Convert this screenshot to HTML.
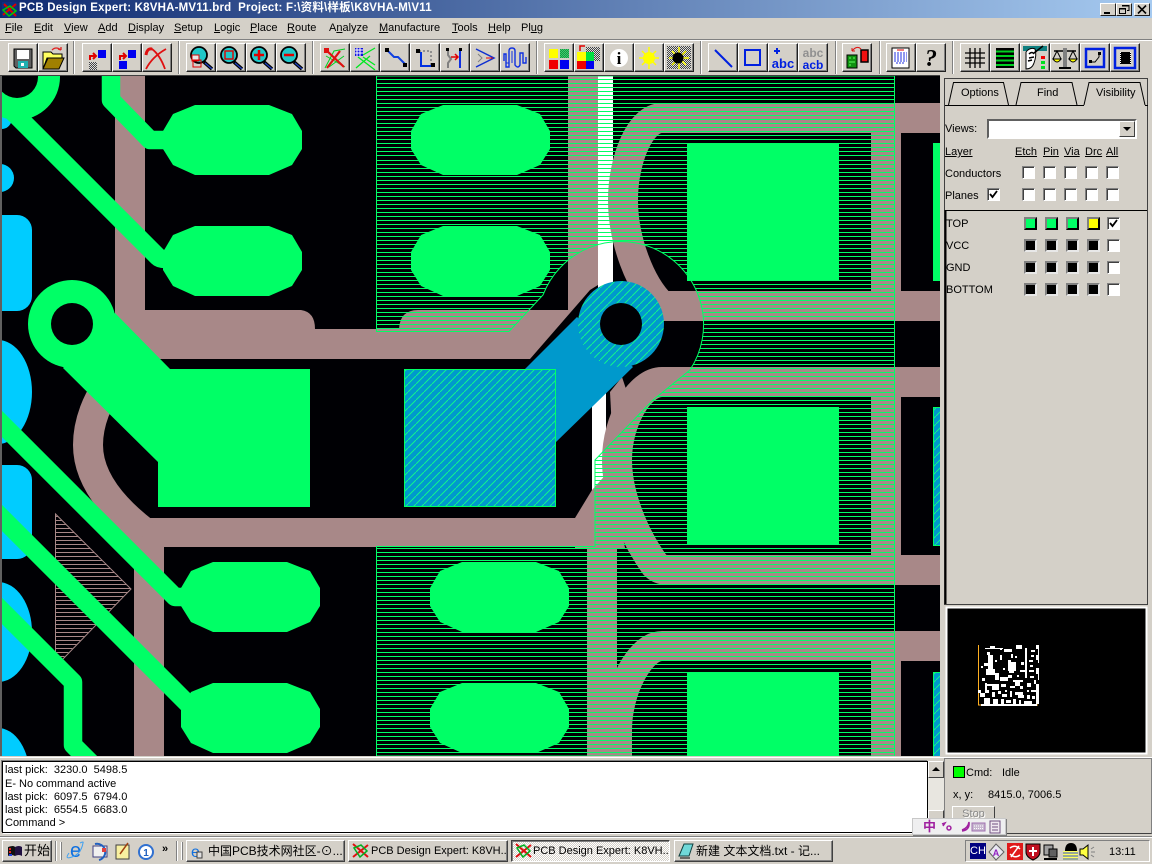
<!DOCTYPE html>
<html><head><meta charset="utf-8"><title>PCB Design Expert</title>
<style>
html,body{margin:0;padding:0}
body{width:1152px;height:864px;overflow:hidden;position:relative;background:#d4d0c8;font-family:"Liberation Sans","Noto Sans CJK SC",sans-serif;font-size:11px;color:#000}
.a{position:absolute}
.t{position:absolute;white-space:pre;line-height:13px}
.b{position:absolute;box-sizing:border-box;width:30px;height:29px;top:43px;background:#d4d0c8;border:1px solid;border-color:#fff #202020 #202020 #fff;box-shadow:inset -1px -1px #808080}
.g{position:absolute;top:41px;width:1px;height:33px;background:#808080;border-right:1px solid #fff}
.c{position:absolute;box-sizing:border-box;width:13px;height:13px;background:#fff;border:1px solid;border-color:#808080 #fff #fff #808080;box-shadow:inset 1px 1px #404040}
.s{position:absolute;box-sizing:border-box;width:13px;height:13px;border:2px solid;border-color:#808080 #000 #000 #808080}
.k{background:#000;border-color:#808080 #e8e8e8 #e8e8e8 #808080}
.w{position:absolute;top:3px;height:13px;box-sizing:border-box;width:16px;background:#d4d0c8;border:1px solid;border-color:#fff #202020 #202020 #fff}
.tb{position:absolute;top:840px;height:22px;box-sizing:border-box;background:#d4d0c8;border:1px solid;border-color:#fff #404040 #404040 #fff;box-shadow:inset -1px -1px #808080;font-size:11px;line-height:20px;white-space:pre;overflow:hidden}
u{text-decoration:underline}
</style></head><body>

<div class="a" style="left:0;top:0;width:1152px;height:18px;background:linear-gradient(90deg,#0f2a70,#a6caf0)"></div>
<div class="t" style="left:19px;top:2px;font-weight:bold;font-size:11.5px;color:#fff;letter-spacing:.2px">PCB Design Expert: K8VHA-MV11.brd  Project: F:\资料\样板\K8VHA-M\V11</div>
<svg class="a" style="left:2px;top:2px" width="16" height="16"><rect width="15" height="15" fill="#103080"/><path d="M1 13L14 2M2 2L14 14" stroke="#d00" stroke-width="2"/><path d="M1 8L8 4L14 9L7 14Z" fill="none" stroke="#0c0" stroke-width="1.5"/></svg>
<div class="w" style="left:1100px"><svg width="14" height="11"><rect x="3" y="8" width="6" height="2"/></svg></div>
<div class="w" style="left:1116px"><svg width="14" height="11"><path d="M5 1.500h7v5h-2M2.500 4.500h6v5h-6z" fill="none" stroke="#000"/><path d="M5 2h7M2 5h7" stroke="#000"/></svg></div>
<div class="w" style="left:1134px"><svg width="14" height="11"><path d="M3 1.500L11 9.500M11 1.500L3 9.500" stroke="#000" stroke-width="1.600"/></svg></div>

<div class="t" style="left:5px;top:22px"><u>F</u>ile</div>
<div class="t" style="left:34px;top:22px"><u>E</u>dit</div>
<div class="t" style="left:64px;top:22px"><u>V</u>iew</div>
<div class="t" style="left:98px;top:22px"><u>A</u>dd</div>
<div class="t" style="left:128px;top:22px"><u>D</u>isplay</div>
<div class="t" style="left:174px;top:22px"><u>S</u>etup</div>
<div class="t" style="left:214px;top:22px"><u>L</u>ogic</div>
<div class="t" style="left:250px;top:22px"><u>P</u>lace</div>
<div class="t" style="left:287px;top:22px"><u>R</u>oute</div>
<div class="t" style="left:329px;top:22px">A<u>n</u>alyze</div>
<div class="t" style="left:379px;top:22px"><u>M</u>anufacture</div>
<div class="t" style="left:452px;top:22px"><u>T</u>ools</div>
<div class="t" style="left:488px;top:22px"><u>H</u>elp</div>
<div class="t" style="left:521px;top:22px">Pl<u>u</u>g</div>
<div class="a" style="left:0;top:39px;width:1152px;height:1px;background:#808080"></div>
<div class="a" style="left:0;top:40px;width:1152px;height:1px;background:#fff"></div>

<div class="g" style="left:73px"></div><div class="g" style="left:178px"></div><div class="g" style="left:312px"></div><div class="g" style="left:536px"></div><div class="g" style="left:700px"></div><div class="g" style="left:835px"></div><div class="g" style="left:879px"></div><div class="g" style="left:952px"></div>

<div class="b" style="left:8px"></div><div class="b" style="left:38px"></div>
<div class="b" style="left:82px"></div><div class="b" style="left:112px"></div><div class="b" style="left:142px"></div>
<div class="b" style="left:186px"></div><div class="b" style="left:216px"></div><div class="b" style="left:246px"></div><div class="b" style="left:276px"></div>
<div class="b" style="left:320px"></div><div class="b" style="left:350px"></div><div class="b" style="left:380px"></div><div class="b" style="left:410px"></div><div class="b" style="left:440px"></div><div class="b" style="left:470px"></div><div class="b" style="left:500px"></div>
<div class="b" style="left:544px"></div><div class="b" style="left:574px"></div><div class="b" style="left:604px"></div><div class="b" style="left:634px"></div><div class="b" style="left:664px"></div>
<div class="b" style="left:708px"></div><div class="b" style="left:738px"></div><div class="b" style="left:768px"></div><div class="b" style="left:798px"></div>
<div class="b" style="left:842px"></div>
<div class="b" style="left:886px"></div><div class="b" style="left:916px"></div>
<div class="b" style="left:960px"></div><div class="b" style="left:990px"></div><div class="b" style="left:1020px"></div><div class="b" style="left:1050px"></div><div class="b" style="left:1080px"></div><div class="b" style="left:1110px"></div>

<!-- toolbar icons -->
<svg class="a" style="left:0;top:43px" width="1152" height="30">
<defs>
<pattern id="dg" width="2" height="2" patternUnits="userSpaceOnUse"><rect width="2" height="2" fill="#ddd"/><rect width="1" height="1" fill="#444"/><rect x="1" y="1" width="1" height="1" fill="#444"/></pattern>
<g id="mag"><path d="M18 19L26 26" stroke="#000" stroke-width="3.500"/><path d="M19 20L26 26" stroke="#2040c0" stroke-width="1.200"/><circle cx="13" cy="12" r="8" fill="#20c8c8" stroke="#000" stroke-width="1.800"/></g>
</defs>
<!-- save -->
<g transform="translate(8,0)"><path d="M6 6h18v19H8l-2-2z" fill="#606060" stroke="#000"/><rect x="9" y="7" width="12" height="9" fill="#fff"/><rect x="10" y="18" width="10" height="7" fill="#20b0b0"/><rect x="13" y="20" width="3" height="3" fill="#fff"/></g>
<!-- open -->
<g transform="translate(38,0)"><path d="M5 9h8l2 2h9v4H9l-4 11z" fill="#ffff60" stroke="#000"/><path d="M5 26L10 15h16l-5 11z" fill="#a08000" stroke="#000"/><path d="M14 7Q18 3 23 7M23 7l-3-1M23 7v-3" fill="none" stroke="#e02020" stroke-width="1.300"/></g>
<!-- layer move -->
<g transform="translate(82,0)"><path d="M8 17v-4h5M11 10l3 3-3 3" fill="none" stroke="#e00000" stroke-width="2"/><rect x="16" y="7" width="8" height="8" fill="#0000f0"/><rect x="7" y="19" width="8" height="8" fill="url(#dg)"/></g>
<g transform="translate(112,0)"><path d="M8 17v-4h5M11 10l3 3-3 3" fill="none" stroke="#e00000" stroke-width="2"/><rect x="16" y="7" width="8" height="8" fill="#0000f0"/><rect x="7" y="18" width="8" height="8" fill="#0000f0"/></g>
<g transform="translate(142,0)"><path d="M4 12Q5 5 10 6Q18 12 23 26M4 26Q10 14 24 6" fill="none" stroke="#e01010" stroke-width="1.800"/><path d="M4 12Q5 5 10 6" fill="none" stroke="#e01010" stroke-width="3"/></g>
<!-- zoom -->
<g transform="translate(186,0)"><use href="#mag"/><rect x="6" y="12" width="7" height="6" fill="#e8e8e8" stroke="#d00"/><rect x="7" y="17" width="8" height="7" fill="none" stroke="#e00000"/></g>
<g transform="translate(216,0)"><use href="#mag"/><rect x="9" y="8" width="8" height="8" fill="none" stroke="#e00000" stroke-width="1.400"/></g>
<g transform="translate(246,0)"><use href="#mag"/><path d="M8 12h10M13 7v10" stroke="#e00000" stroke-width="2.500"/></g>
<g transform="translate(276,0)"><use href="#mag"/><path d="M8 12h10" stroke="#e00000" stroke-width="2.500"/></g>
<!-- route -->
<g transform="translate(320,0)"><path d="M5 25L14 8L25 6M6 13L25 24M9 24L24 13" stroke="#00d020" fill="none"/><path d="M5 6L24 24M7 25L20 8" stroke="#e01010" stroke-width="2.200"/><rect x="4" y="5" width="5" height="5" fill="#e01010"/></g>
<g transform="translate(350,0)"><path d="M13 12L25 5M13 14L25 22M6 25L20 13M8 14L25 27" stroke="#00e820" fill="none" stroke-width="1.300"/><rect x="5" y="5" width="8" height="8" fill="#1010e0"/><path d="M7 5v8M10 5v8M5 7h8M5 10h8" stroke="#fff"/></g>
<g transform="translate(380,0)"><path d="M8 8L14 14L18 14L25 21" fill="none" stroke="#1040e0" stroke-width="2"/><rect x="5" y="5" width="4" height="4"/><rect x="23" y="20" width="4" height="4"/></g>
<g transform="translate(410,0)"><path d="M9 8H21V23" fill="none" stroke="#909090" stroke-width="2" stroke-dasharray="2 2"/><path d="M11 9V23H21" fill="none" stroke="#0030e0" stroke-width="2"/><rect x="6" y="6" width="4" height="4"/><rect x="21" y="20" width="4" height="4"/></g>
<g transform="translate(440,0)"><path d="M8 8V12L11 16L8 20V25" fill="none" stroke="#808080" stroke-width="2"/><path d="M20 8V25" stroke="#1030e0" stroke-width="2"/><path d="M11 14H18M15 11l3 3-3 3" fill="none" stroke="#e00000" stroke-width="1.500"/><rect x="6" y="5" width="3" height="3"/><rect x="19" y="5" width="3" height="3"/></g>
<g transform="translate(470,0)"><path d="M6 6L24 15L6 24" fill="none" stroke="#1030d0" stroke-width="1.500"/><path d="M8 11L12 15L8 19" fill="none" stroke="#808080"/><path d="M16 15h7" stroke="#e00"/></g>
<g transform="translate(500,0)"><path d="M4 18V11H6V24H9V8Q9 5 12 5Q15 5 15 8V22Q18 26 20 22V10H23V20H26V14" fill="none" stroke="#1030e0" stroke-width="1.400"/><path d="M6 20H9M12 8V20" stroke="#1030e0"/></g>
<!-- colors -->
<g transform="translate(544,0)"><rect x="5" y="6" width="9" height="9" fill="#ffff00"/><rect x="16" y="6" width="9" height="9" fill="url(#dg)"/><rect x="16" y="6" width="9" height="9" fill="#00c040" opacity=".7"/><rect x="5" y="17" width="9" height="9" fill="#f00000"/><rect x="16" y="17" width="9" height="9" fill="#0000f0"/></g>
<g transform="translate(574,0)"><rect x="12" y="4" width="14" height="14" fill="url(#dg)"/><path d="M6 8V3h5" fill="none" stroke="#e00000" stroke-width="1.500"/><rect x="3" y="9" width="9" height="9" fill="#ffff00"/><rect x="12" y="9" width="8" height="9" fill="#00e040"/><rect x="3" y="18" width="9" height="8" fill="#f00000"/><rect x="12" y="18" width="8" height="8" fill="#0000f0"/></g>
<g transform="translate(604,0)"><circle cx="15" cy="15" r="9" fill="#fff"/><text x="15" y="21" text-anchor="middle" font-family="Liberation Serif" font-weight="bold" font-size="17">i</text></g>
<g transform="translate(634,0)"><path d="M15 4V26M5 15H25M8 8L22 22M22 8L8 22" stroke="#ffff00" stroke-width="1.500"/><circle cx="15" cy="15" r="6" fill="#ffff00"/></g>
<g transform="translate(664,0)"><rect x="3" y="3" width="24" height="23" fill="url(#dg)"/><path d="M15 4V26M5 15H25M8 8L22 22M22 8L8 22" stroke="#ffff00" stroke-width="1.500"/><circle cx="14" cy="15" r="5.500" fill="#000"/></g>
<!-- draw -->
<g transform="translate(708,0)"><path d="M7 7L24 24" stroke="#0020e0" stroke-width="2"/></g>
<g transform="translate(738,0)"><rect x="7" y="7" width="15" height="15" fill="none" stroke="#0020e0" stroke-width="2"/></g>
<g transform="translate(768,0)"><path d="M6 8h6M9 5v6" stroke="#0020e0" stroke-width="2"/><text x="15" y="25" text-anchor="middle" font-weight="bold" font-size="13" fill="#0020e0" font-family="Liberation Sans">abc</text></g>
<g transform="translate(798,0)"><text x="15" y="14" text-anchor="middle" font-weight="bold" font-size="12" fill="#909090" font-family="Liberation Sans">abc</text><text x="15" y="26" text-anchor="middle" font-weight="bold" font-size="12" fill="#0020e0" font-family="Liberation Sans">acb</text></g>
<g transform="translate(842,0)"><rect x="5" y="12" width="10" height="13" fill="#109010" stroke="#000"/><path d="M7 15h2M11 15h2M7 19h6M7 22h2" stroke="#60ff60"/><rect x="19" y="7" width="7" height="12" fill="#f01010" stroke="#000" stroke-width="1.500"/><path d="M19 6Q15 2 10 8M10 8l0-3M10 8l3 0" fill="none" stroke="#e01010"/></g>
<g transform="translate(886,0)"><rect x="6" y="5" width="17" height="20" fill="#fff" stroke="#000"/><path d="M11 7h7" stroke="#e00000"/><path d="M8 10h13M8 12h13M8 14h13M8 16h13M8 18h13M10 20h8" stroke="#2030e0" stroke-dasharray="2 1"/></g>
<g transform="translate(916,0)"><text x="15" y="23" text-anchor="middle" font-family="Liberation Serif" font-weight="bold" font-size="24" font-style="italic">?</text></g>
<g transform="translate(960,0)"><path d="M10 5V25M20 5V25M5 10H25M5 20H25" stroke="#000" stroke-width="1.300"/><path d="M15 5V25M5 15H25" stroke="#000" stroke-width="1.300"/></g>
<g transform="translate(990,0)"><rect x="6" y="5" width="18" height="20"/><path d="M6 8.500H24M6 13H24M6 17.500H24M6 22H24" stroke="#00d020" stroke-width="2"/></g>
<g transform="translate(1020,0)"><rect x="3" y="3" width="24" height="5" fill="#108080"/><path d="M6 9Q10 4 15 6Q17 12 14 20Q12 26 6 26Z" fill="#fff" stroke="#000"/><path d="M9 11Q12 8 14 11M9 15l5-1M8 18l4-1" stroke="#000" fill="none" stroke-width="1.500"/><path d="M14 10L23 3" stroke="#000" stroke-width="1.500"/><rect x="21" y="13" width="4" height="3" fill="#f00000"/><rect x="21" y="18" width="4" height="3" fill="#00e020"/><rect x="21" y="23" width="4" height="3" fill="#00e020"/></g>
<g transform="translate(1050,0)"><path d="M4 8H26" stroke="#000" stroke-width="1.500"/><rect x="13" y="5" width="4" height="19" fill="#808080"/><path d="M9 25H21" stroke="#000" stroke-width="2"/><path d="M7 8L3 16H11Z M23 8L19 16H27Z" fill="none" stroke="#000"/><path d="M3 16Q7 22 11 16ZM19 16Q23 22 27 16Z" fill="#ffff00" stroke="#000"/></g>
<g transform="translate(1080,0)"><rect x="6" y="6" width="18" height="18" fill="none" stroke="#0020e0" stroke-width="2.500"/><path d="M11 19H15L19 14V11" fill="none" stroke="#000"/><rect x="9" y="17" width="3" height="3"/><rect x="18" y="9" width="3" height="3"/></g>
<g transform="translate(1110,0)"><rect x="5" y="5" width="20" height="20" fill="none" stroke="#0020e0" stroke-width="2.500"/><rect x="10" y="9" width="11" height="12"/><path d="M10.500 9v12M20.500 9v12" stroke="#fff" stroke-dasharray="1 1"/></g>
</svg>

<!-- PCB canvas -->
<svg class="a" style="left:0;top:0" width="1152" height="864" viewBox="0 0 1152 864">
<defs>
<clipPath id="cv"><rect x="2" y="76" width="938" height="680"/></clipPath>
<clipPath id="pl"><path d="M376 76H895V756H376V546H595V460L653 400L690 370A83 83 0 1 0 543 295L509 332H376Z"/></clipPath>
<clipPath id="tr"><path d="M55 514L131 589L61 660H55Z"/></clipPath>
<path id="l5" d="M376 .5h519m-519 4h519m-519 4h519m-519 4h519m-519 4h519" fill="none" stroke-width="1" shape-rendering="crispEdges"/>
<g id="l25"><use href="#l5"/><use href="#l5" y="20"/><use href="#l5" y="40"/><use href="#l5" y="60"/><use href="#l5" y="80"/></g>
<pattern id="bh" width="8" height="8" patternUnits="userSpaceOnUse"><rect width="8" height="8" fill="#0099cc"/><path d="M-1 9L9 -1" stroke="#10f090" stroke-width="1" shape-rendering="crispEdges"/></pattern>
<polygon id="pad" points="32,0 106,0 129,9 139,26 139,44 129,60 106,70 32,70 10,60 0,44 0,26 10,9" fill="#00ff66"/>
</defs>
<g clip-path="url(#cv)">
<rect x="2" y="76" width="938" height="680" fill="#000004"/>
<!-- cyan -->
<g fill="#00ccff">
<circle cx="0" cy="178" r="14"/><ellipse cx="2" cy="118" rx="10" ry="11"/>
<rect x="-14" y="215" width="46" height="96" rx="15"/>
<ellipse cx="-2" cy="392" rx="34" ry="52"/>
<rect x="-14" y="465" width="46" height="94" rx="15"/>
<ellipse cx="-2" cy="632" rx="34" ry="50"/>
<ellipse cx="-2" cy="778" rx="32" ry="50"/>
</g>
<!-- white -->
<rect x="598" y="76" width="15" height="215" fill="#fff"/>
<path d="M592 406L606 392V495H592Z" fill="#fff"/>
<!-- copper -->
<g fill="#a88888">
<path d="M115 76H145V310H301Q315 312 315 329H399Q400 310 418 310H568V76H598V285L590 290L530 359H115Z"/>
<rect x="134" y="520" width="30" height="236"/>
<rect x="138" y="518" width="472" height="29"/>
<path d="M575 518L592 490L610 470L625 548H575Z"/>
<path d="M610 392L622 377L628 395L612 430Z"/>
<rect x="587" y="540" width="30" height="216"/>
<rect x="871" y="132" width="30" height="160"/>
<rect x="871" y="396" width="30" height="160"/>
<rect x="871" y="660" width="30" height="96"/>
</g>
<g fill="none" stroke="#a88888" stroke-width="30">
<path d="M115 378C96 398 88 425 88 445C88 480 115 510 145 533"/>
<path d="M940 118H662C640 118 623 160 623 200C623 240 640 285 662 306H940"/>
<path d="M940 382H662C640 382 617 420 617 460C617 490 630 530 655 565Q660 570 668 570H940"/>
<path d="M940 646H662C640 646 617 690 617 730V756"/>
</g>
<!-- brown hatched triangle -->
<g clip-path="url(#tr)" stroke="#a88888"><use href="#l25" x="-330" y="516"/><use href="#l25" x="-330" y="616"/></g>
<path d="M55.500 514L131 589L62 660H55.500Z" fill="none" stroke="#a88888"/>
<!-- plane -->
<g clip-path="url(#pl)" stroke="#00ff66"><use href="#l5" y="79"/><use href="#l5" y="99"/><use href="#l5" y="119"/><use href="#l5" y="139"/><use href="#l25" y="160"/><use href="#l25" y="260"/><use href="#l25" y="360"/><use href="#l25" y="460"/><use href="#l25" y="560"/><use href="#l25" y="660"/></g>
<path d="M376.500 76H894.500V756H376.500V546.500H595V460L653 400L690 370A83 83 0 1 0 543 295L509 331.500H376.500Z" fill="none" stroke="#00ff66"/>
<!-- blue -->
<path d="M577 317L525 369H404V506H555V443L633 367Z" fill="#0099cc"/>
<rect x="404.500" y="369.500" width="151" height="137" fill="url(#bh)" stroke="#00ff66"/>
<circle cx="621" cy="324" r="43" fill="url(#bh)"/>
<circle cx="621" cy="324" r="21" fill="#000004"/>
<rect x="933.500" y="407.500" width="8" height="138" fill="url(#bh)" stroke="#00ff66"/>
<rect x="933.500" y="672.500" width="8" height="90" fill="url(#bh)" stroke="#00ff66"/>
<!-- green -->
<g fill="#00ff66">
<use href="#pad" x="163" y="105"/><use href="#pad" x="163" y="226"/>
<use href="#pad" x="411" y="105"/><use href="#pad" x="411" y="226"/>
<use href="#pad" x="181" y="562"/><use href="#pad" x="181" y="683"/>
<use href="#pad" x="430" y="562"/><use href="#pad" x="430" y="683"/>
<rect x="687" y="143" width="152" height="138"/>
<rect x="687" y="407" width="152" height="138"/>
<rect x="687" y="672" width="152" height="100"/>
<rect x="933" y="143" width="7" height="138"/>
<path d="M115 313L170 369H310V507H158V462L63 368Z"/>
<circle cx="72" cy="324" r="44"/>
<circle cx="17" cy="77" r="43"/>
</g>
<circle cx="72" cy="324" r="21" fill="#000004"/>
<circle cx="17" cy="77" r="21" fill="#000004"/>
<g fill="none" stroke="#00ff66" stroke-width="18.500" stroke-linejoin="round">
<path d="M111 70V100L150 140H175"/>
<path d="M5 104L158 257Q160 259 165 259H175"/>
<path d="M-6 416L175 597H190"/>
<path d="M-6 510L195 711"/>
<path d="M-6 603L73 682V745L95 767"/>
</g>
</g>
<rect x="0" y="76" width="2" height="680" fill="#606060"/>
<rect x="0" y="75" width="940" height="1" fill="#404040"/>

<!-- panel tabs -->
<path d="M944.500 604.500V78.500H1147.500V604.500Z" fill="none" stroke="#404040"/>
<path d="M945 105.500H1084M1145 105.500H1148" stroke="#000" fill="none"/>
<path d="M948.500 105L953.500 82.500H1003.500L1008.500 105M1016 105L1021 82.500H1072L1077 105" fill="none" stroke="#000"/>
<path d="M1084 105L1089 82.500H1140L1145 105" fill="none" stroke="#000"/>
<path d="M945.500 210.500H1147" stroke="#000"/>
<path d="M945.500 210V604" stroke="#000" stroke-width="2"/>
<!-- minimap -->
<rect x="946.500" y="607.500" width="200" height="146" fill="#000" stroke="#fff" stroke-width="2"/>
<path d="M978.500 645V705H1038" fill="none" stroke="#ffb020" stroke-width="1"/>
<path fill="#fff" d="M1038 645h1v18h-1zM1038 668h1v12h-1zM1036 645h2v4h-2zM1036 655h2v5h-2zM1036 668h2v6h-2zM1036 684h3v20h-3zM981 704h56v2h-56zM1025 648h2v30h-2zM985 648h18v1h-18zM1004 649h8v3h-8zM1016 645h6v4h-6zM990 646h5v2h-5zM1000 655h2v5h-2zM987 652h3v3h-3zM988 655h5v14h-5zM984 663h4v3h-4zM1008 660h3v4h-3zM1021 662h3v3h-3zM1008 662h8v9h-8zM1009 671h5v2h-5zM986 669h9v6h-9zM995 673h4v7h-4zM981 666h2v2h-2zM1000 677h8v4h-8zM1008 675h4v3h-4zM1013 680h10v2h-10zM1020 670h6v2h-6zM1031 650h4v2h-4zM1031 655h3v2h-3zM1029 660h4v2h-4zM1030 665h3v2h-3zM1029 670h5v2h-5zM1030 676h4v2h-4zM1034 680h2v4h-2zM985 683h2v8h-2zM987 684h12v2h-12zM992 686h7v4h-7zM1001 684h5v3h-5zM1010 686h5v2h-5zM1015 682h5v4h-5zM1020 686h3v3h-3zM1027 683h4v4h-4zM1031 690h5v2h-5zM980 693h5v4h-5zM985 690h4v3h-4zM992 692h3v5h-3zM998 691h3v3h-3zM1002 694h5v3h-5zM1010 691h2v6h-2zM1015 692h8v3h-8zM1018 695h6v3h-6zM1027 695h3v4h-3zM1032 696h3v3h-3zM984 698h6v6h-6zM993 699h5v5h-5zM1001 699h3v5h-3zM1006 700h5v3h-5zM1013 699h3v5h-3zM1019 700h2v4h-2zM1024 701h8v3h-8zM982 678h3v3h-3zM978 690h3v3h-3zM1000 648h2v2h-2zM1011 654h2v4h-2zM1015 656h2v2h-2zM995 660h2v2h-2zM1003 668h2v2h-2zM1017 675h2v2h-2zM1027 690h2v2h-2zM1005 690h2v2h-2z"/>
</svg>

<!-- panel contents -->
<div class="t" style="left:961px;top:87px">Options</div>
<div class="t" style="left:1037px;top:87px">Find</div>
<div class="t" style="left:1096px;top:87px">Visibility</div>
<div class="t" style="left:945px;top:123px">Views:</div>
<div class="a" style="left:987px;top:119px;width:150px;height:20px;box-sizing:border-box;background:#fff;border:2px solid;border-color:#606060 #fff #fff #606060"></div>
<div class="a" style="left:1119px;top:121px;width:16px;height:16px;box-sizing:border-box;background:#d4d0c8;border:1px solid;border-color:#fff #404040 #404040 #fff"></div>
<div class="a" style="left:1123px;top:127px;width:0;height:0;border:4px solid transparent;border-top:4px solid #000;border-bottom:0"></div>
<div class="t" style="left:945px;top:146px"><u>Layer</u></div>
<div class="t" style="left:1015px;top:146px"><u>Etch</u></div>
<div class="t" style="left:1043px;top:146px"><u>Pin</u></div>
<div class="t" style="left:1064px;top:146px"><u>Via</u></div>
<div class="t" style="left:1085px;top:146px"><u>Drc</u></div>
<div class="t" style="left:1106px;top:146px"><u>All</u></div>
<div class="t" style="left:945px;top:168px">Conductors</div>
<div class="t" style="left:945px;top:190px">Planes</div>
<div class="c" style="left:1022px;top:166px"></div><div class="c" style="left:1043px;top:166px"></div><div class="c" style="left:1064px;top:166px"></div><div class="c" style="left:1085px;top:166px"></div><div class="c" style="left:1106px;top:166px"></div>
<div class="c" style="left:1022px;top:188px"></div><div class="c" style="left:1043px;top:188px"></div><div class="c" style="left:1064px;top:188px"></div><div class="c" style="left:1085px;top:188px"></div><div class="c" style="left:1106px;top:188px"></div>
<div class="c" style="left:987px;top:188px"><svg width="11" height="11" style="display:block"><path d="M2 5L4.500 8L9 2" fill="none" stroke="#000" stroke-width="1.800"/></svg></div>

<div class="t" style="left:946px;top:218px">TOP</div>
<div class="t" style="left:946px;top:240px">VCC</div>
<div class="t" style="left:946px;top:262px">GND</div>
<div class="t" style="left:946px;top:284px">BOTTOM</div>
<div class="s" style="left:1024px;top:217px;background:#00ff66"></div><div class="s" style="left:1045px;top:217px;background:#00ff66"></div><div class="s" style="left:1066px;top:217px;background:#00ff66"></div><div class="s" style="left:1087px;top:217px;background:#ffff00"></div>
<div class="s k" style="left:1024px;top:239px"></div><div class="s k" style="left:1045px;top:239px"></div><div class="s k" style="left:1066px;top:239px"></div><div class="s k" style="left:1087px;top:239px"></div>
<div class="s k" style="left:1024px;top:261px"></div><div class="s k" style="left:1045px;top:261px"></div><div class="s k" style="left:1066px;top:261px"></div><div class="s k" style="left:1087px;top:261px"></div>
<div class="s k" style="left:1024px;top:283px"></div><div class="s k" style="left:1045px;top:283px"></div><div class="s k" style="left:1066px;top:283px"></div><div class="s k" style="left:1087px;top:283px"></div>
<div class="c" style="left:1107px;top:217px"><svg width="11" height="11" style="display:block"><path d="M2 5L4.500 8L9 2" fill="none" stroke="#000" stroke-width="1.800"/></svg></div>
<div class="c" style="left:1107px;top:239px"></div><div class="c" style="left:1107px;top:261px"></div><div class="c" style="left:1107px;top:283px"></div>

<!-- command -->
<div class="a" style="left:0;top:757px;width:1152px;height:1px;background:#fff"></div>
<div class="a" style="left:2px;top:761px;width:926px;height:72px;box-sizing:border-box;background:#fff;border:1px solid #000;box-shadow:-1px -1px #808080,1px 1px #fff"></div>
<div class="t" style="left:5px;top:764px">last pick:  3230.0  5498.5</div>
<div class="t" style="left:5px;top:778px">E- No command active</div>
<div class="t" style="left:5px;top:791px">last pick:  6097.5  6794.0</div>
<div class="t" style="left:5px;top:804px">last pick:  6554.5  6683.0</div>
<div class="t" style="left:5px;top:817px">Command &gt;</div>
<div class="a" style="left:928px;top:761px;width:16px;height:72px;background:#e8e6e0"></div>
<div class="a" style="left:928px;top:761px;width:16px;height:17px;box-sizing:border-box;background:#d4d0c8;border:1px solid;border-color:#fff #404040 #404040 #fff"></div>
<div class="a" style="left:932px;top:767px;width:0;height:0;border:4px solid transparent;border-bottom:4px solid #000;border-top:0"></div>
<div class="a" style="left:928px;top:810px;width:16px;height:23px;box-sizing:border-box;background:#d4d0c8;border:1px solid;border-color:#fff #404040 #404040 #fff"></div>
<div class="a" style="left:944px;top:758px;width:208px;height:76px;box-sizing:border-box;border:1px solid;border-color:#808080 #808080 #404040 #808080"></div>
<div class="a" style="left:953px;top:766px;width:12px;height:12px;box-sizing:border-box;background:#00ff00;border:1px solid #000"></div>
<div class="t" style="left:966px;top:767px">Cmd:</div>
<div class="t" style="left:1002px;top:767px">Idle</div>
<div class="t" style="left:953px;top:789px">x, y:</div>
<div class="t" style="left:988px;top:789px">8415.0, 7006.5</div>
<div class="a" style="left:952px;top:806px;width:43px;height:18px;box-sizing:border-box;border:1px solid;border-color:#fff #404040 #404040 #fff;text-align:center;line-height:15px;color:#888;text-shadow:1px 1px #fff">Stop</div>
<div class="a" style="left:912px;top:818px;width:94px;height:17px;box-sizing:border-box;background:#efeff0;border:1px solid #c8c8c8;box-shadow:1px 1px #808080"></div>
<svg class="a" style="left:912px;top:818px" width="94" height="17"><text x="11" y="13" font-size="13" font-weight="bold" fill="#a020a0" font-family="Noto Sans CJK SC">中</text><path d="M30 6l3-1-2 3M37 8a2 2 0 1 1-.1 0M50 12Q56 10 57 4Q58 12 50 13" fill="none" stroke="#a020a0" stroke-width="1.500"/><rect x="60" y="5" width="13" height="8" fill="#c8b8d0" stroke="#a070b0"/><path d="M62 8h9M62 10.500h9" stroke="#fff" stroke-dasharray="1 1"/><rect x="78" y="3" width="10" height="12" fill="#f0e8f0" stroke="#705080"/><path d="M80 6h6M80 9h6M80 12h6" stroke="#705080"/></svg>

<!-- taskbar -->
<div class="a" style="left:0;top:836px;width:1152px;height:1px;background:#808080"></div>
<div class="a" style="left:0;top:837px;width:1152px;height:1px;background:#fff"></div>
<div class="tb" style="left:2px;width:50px;padding-left:21px;font-size:13px">开始</div>
<svg class="a" style="left:6px;top:844px" width="18" height="14"><path d="M2 3Q8 1 9 3V12Q5 10 2 12Z" fill="#101010"/><path d="M9 3Q13 1 16 3V12Q13 10 9 12Z" fill="#201040"/><path d="M3 5h2M3 8h2" stroke="#e02020" stroke-width="2"/><path d="M3 11h3" stroke="#2040e0" stroke-width="2"/></svg>
<div class="a" style="left:55px;top:841px;width:1px;height:20px;background:#808080;border-right:1px solid #fff"></div>
<div class="a" style="left:60px;top:842px;width:1px;height:18px;background:#fff;border-right:1px solid #808080"></div>
<svg class="a" style="left:65px;top:840px" width="120" height="22">
<text x="5" y="17" font-family="Liberation Sans" font-size="20" fill="#1070e0">e</text><path d="M4 13Q-1 20 7 17Q16 14 18 3Q19 1 15 3" fill="none" stroke="#40a0f0"/>
<rect x="28" y="6" width="14" height="11" fill="#f0f0f0" stroke="#404080"/><path d="M30 4A8 8 0 0 1 34 20" fill="none" stroke="#2060c0" stroke-width="2"/><rect x="37" y="8" width="4" height="4" fill="#e04040"/>
<rect x="51" y="5" width="13" height="14" fill="#f8f0a0" stroke="#404040"/><path d="M55 14L63 3" stroke="#a04010" stroke-width="1.500"/>
<circle cx="81" cy="12" r="7" fill="#fff" stroke="#3070d0" stroke-width="2"/><text x="81" y="16" text-anchor="middle" font-size="10" font-weight="bold" fill="#2060c0" font-family="Liberation Sans">1</text>
<text x="97" y="12" font-size="11" font-weight="bold" font-family="Liberation Sans">»</text>
</svg>
<div class="a" style="left:176px;top:841px;width:1px;height:20px;background:#808080;border-right:1px solid #fff"></div>
<div class="a" style="left:181px;top:842px;width:1px;height:18px;background:#fff;border-right:1px solid #808080"></div>
<div class="tb" style="left:186px;width:159px;padding-left:21px;font-size:12px">中国PCB技术网社区-⊙...</div>
<div class="tb" style="left:348px;width:160px;padding-left:22px">PCB Design Expert: K8VH...</div>
<div class="tb" style="left:511px;width:159px;padding-left:21px;border-color:#404040 #fff #fff #404040;box-shadow:inset 1px 1px #808080;background:repeating-conic-gradient(#fff 0 25%,#d4d0c8 0 50%) 0 0/2px 2px;line-height:21px">PCB Design Expert: K8VH...</div>
<div class="tb" style="left:674px;width:159px;padding-left:21px;font-size:12px">新建 文本文档.txt - 记...</div>
<svg class="a" style="left:0;top:840px" width="840" height="22">
<text x="191" y="17" font-size="16" fill="#1070e0" font-family="Liberation Sans">e</text><rect x="197" y="12" width="5" height="6" fill="#e0e0e0" stroke="#404040"/>
<g><path d="M353 4L368 17M353 17L368 5" stroke="#e01010" stroke-width="2"/><path d="M354 8L361 5L367 11L360 17Z" fill="none" stroke="#00b020" stroke-width="1.500"/></g>
<g transform="translate(163,0)"><path d="M353 4L368 17M353 17L368 5" stroke="#e01010" stroke-width="2"/><path d="M354 8L361 5L367 11L360 17Z" fill="none" stroke="#00b020" stroke-width="1.500"/></g>
<path d="M679 16L684 4H693L689 16Z" fill="#70d8d8" stroke="#104040"/><path d="M680 18H690" stroke="#000"/>
</svg>
<!-- tray -->
<div class="a" style="left:965px;top:840px;width:185px;height:22px;box-sizing:border-box;border:1px solid;border-color:#808080 #fff #fff #808080"></div>
<div class="a" style="left:970px;top:843px;width:16px;height:16px;background:#000080;color:#fff;font-size:11px;line-height:16px;text-align:center">CH</div>
<svg class="a" style="left:988px;top:842px" width="120" height="20">
<path d="M8 2L16 10L8 18L1 10Z" fill="#e8e8f0" stroke="#606060"/><text x="8" y="14" font-size="9" text-anchor="middle" fill="#9020c0" font-weight="bold" font-family="Liberation Sans">A</text>
<rect x="19" y="1" width="16" height="17" fill="#e01818"/><path d="M23 15L31 4M22 6Q27 2 32 7M32 13Q27 17 22 12" fill="none" stroke="#fff" stroke-width="1.500"/>
<path d="M38 2H52V10Q52 15 45 18Q38 15 38 10Z" fill="#c01020" stroke="#000"/><path d="M45 5V14M41 9H49" stroke="#fff" stroke-width="2"/>
<rect x="56" y="3" width="9" height="10" fill="#a0a0a0" stroke="#000"/><rect x="61" y="7" width="8" height="8" fill="#606060" stroke="#000"/><path d="M56 17H69" stroke="#000" stroke-width="2"/>
<path d="M77 9Q77 1 83 1Q89 1 89 9Z" fill="#000"/><rect x="75" y="9" width="15" height="9" fill="#ffff60"/><path d="M75 11H90M75 14H90M75 17H90" stroke="#3050d0"/>
<path d="M92 7H95L100 3V17L95 13H92Z" fill="#ffff40" stroke="#000"/><path d="M103 7l3-2M103 10h4M103 13l3 2" stroke="#808080"/>
</svg>
<div class="t" style="left:1109px;top:846px">13:11</div>

</body></html>
